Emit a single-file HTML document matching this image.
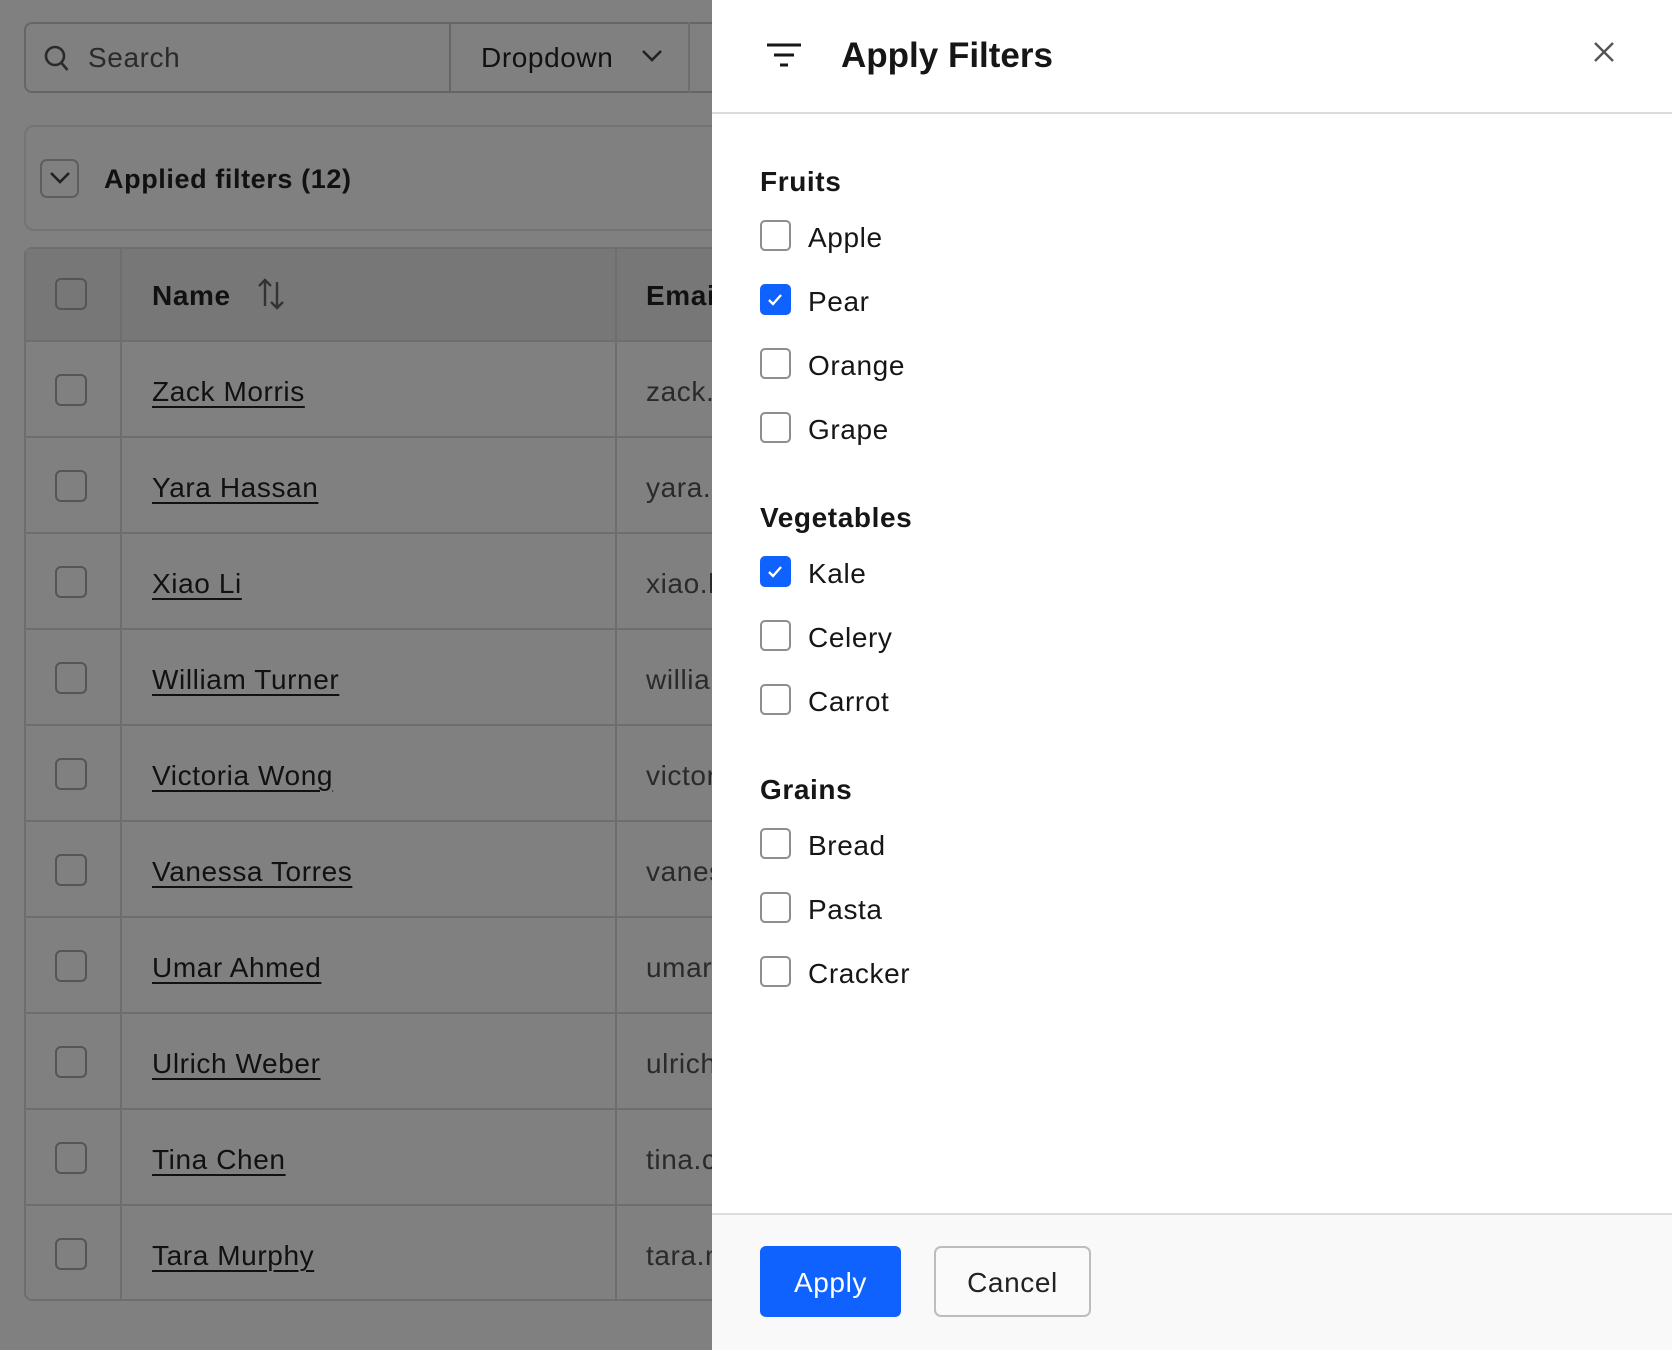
<!DOCTYPE html>
<html><head><meta charset="utf-8">
<style>
*{box-sizing:border-box;margin:0;padding:0}
body{width:1672px;height:1350px;overflow:hidden;background:#808080;font-family:"Liberation Sans",sans-serif;color:#111;position:relative;letter-spacing:0.6px}
.a{position:absolute}
.cb{position:absolute;width:32px;height:32px;border:2px solid #555;border-radius:6px}
.nm{position:absolute;left:152px;font-size:28px;text-decoration:underline;text-underline-offset:5px;text-decoration-thickness:2px;color:#111;margin-top:2px}
.em{position:absolute;left:646px;font-size:28px;color:#2a2a2a;white-space:nowrap;margin-top:2px}
.hl{position:absolute;left:24px;width:700px;height:2px;background:#6e6e6e}
.panel{position:absolute;left:712px;top:0;width:960px;height:1350px;background:#fff}
.pc{position:absolute;left:48px;width:31px;height:31px;border:2px solid #8d8d93;border-radius:5px;background:#fff}
.pc.on{background:#0f62fe;border-color:#0f62fe}
.pl{position:absolute;left:96px;font-size:28px;color:#161616;line-height:32px;margin-top:2px}
.ph{position:absolute;left:48px;font-size:28px;font-weight:bold;color:#161616;line-height:32px;margin-top:2px}
</style></head><body>
<div class="a" style="left:24px;top:22px;width:720px;height:71px;border:2px solid #666;border-radius:8px"></div>
<div class="a" style="left:449px;top:22px;width:2px;height:71px;background:#666"></div>
<div class="a" style="left:688px;top:22px;width:2px;height:71px;background:#6e6e6e"></div>
<svg class="a" style="left:43px;top:44px" width="28" height="30" viewBox="0 0 28 30"><circle cx="12" cy="12" r="9" fill="none" stroke="#2a2a2a" stroke-width="2.6"/><path d="M18.5 19l6 7" stroke="#2a2a2a" stroke-width="2.6"/></svg>
<div class="a" style="left:88px;top:42px;font-size:28px;color:#2a2a2a">Search</div>
<div class="a" style="left:481px;top:42px;font-size:28px;color:#111">Dropdown</div>
<svg class="a" style="left:640px;top:48px" width="24" height="16" viewBox="0 0 24 16"><path d="M3 3l9 9 9-9" fill="none" stroke="#222" stroke-width="2.6"/></svg>
<div class="a" style="left:24px;top:125px;width:720px;height:106px;border:2px solid #747474;border-radius:10px"></div>
<div class="a" style="left:40px;top:159px;width:39px;height:39px;border:2px solid #5e5e5e;border-radius:7px"></div>
<svg class="a" style="left:48px;top:170px" width="24" height="16" viewBox="0 0 24 16"><path d="M3 3l9 9 9-9" fill="none" stroke="#222" stroke-width="2.6"/></svg>
<div class="a" style="left:104px;top:164px;font-size:27px;font-weight:bold;color:#111">Applied filters (12)</div>
<div class="a" style="left:24px;top:247px;width:720px;height:1054px;border:2px solid #6e6e6e;border-radius:8px"></div>
<div class="a" style="left:26px;top:249px;width:700px;height:92px;background:#777"></div>
<div class="a" style="left:120px;top:247px;width:2px;height:1054px;background:#6e6e6e"></div>
<div class="a" style="left:615px;top:247px;width:2px;height:1054px;background:#6e6e6e"></div>
<div class="cb" style="left:55px;top:278px"></div>
<div class="a" style="left:152px;top:280px;font-size:28px;font-weight:bold">Name</div>
<svg class="a" style="left:256px;top:276px" width="32" height="36" viewBox="0 0 32 36"><path d="M9 30V4M3 10l6-6 6 6M21 6v26M15 26l6 6 6-6" fill="none" stroke="#333" stroke-width="2.4"/></svg>
<div class="a" style="left:646px;top:280px;font-size:28px;font-weight:bold;white-space:nowrap">Email</div>
<div class="hl" style="top:340px"></div>
<div class="hl" style="top:436px"></div><div class="hl" style="top:532px"></div><div class="hl" style="top:628px"></div><div class="hl" style="top:724px"></div><div class="hl" style="top:820px"></div><div class="hl" style="top:916px"></div><div class="hl" style="top:1012px"></div><div class="hl" style="top:1108px"></div><div class="hl" style="top:1204px"></div>
<div class="cb" style="left:55px;top:374px"></div><div class="nm" style="top:374px">Zack Morris</div><div class="em" style="top:374px">zack.morris@example.com</div>
<div class="cb" style="left:55px;top:470px"></div><div class="nm" style="top:470px">Yara Hassan</div><div class="em" style="top:470px">yara.hassan@example.com</div>
<div class="cb" style="left:55px;top:566px"></div><div class="nm" style="top:566px">Xiao Li</div><div class="em" style="top:566px">xiao.li@example.com</div>
<div class="cb" style="left:55px;top:662px"></div><div class="nm" style="top:662px">William Turner</div><div class="em" style="top:662px">william@example.com</div>
<div class="cb" style="left:55px;top:758px"></div><div class="nm" style="top:758px">Victoria Wong</div><div class="em" style="top:758px">victoria@example.com</div>
<div class="cb" style="left:55px;top:854px"></div><div class="nm" style="top:854px">Vanessa Torres</div><div class="em" style="top:854px">vanessa@example.com</div>
<div class="cb" style="left:55px;top:950px"></div><div class="nm" style="top:950px">Umar Ahmed</div><div class="em" style="top:950px">umar@example.com</div>
<div class="cb" style="left:55px;top:1046px"></div><div class="nm" style="top:1046px">Ulrich Weber</div><div class="em" style="top:1046px">ulrich@example.com</div>
<div class="cb" style="left:55px;top:1142px"></div><div class="nm" style="top:1142px">Tina Chen</div><div class="em" style="top:1142px">tina.chen@example.com</div>
<div class="cb" style="left:55px;top:1238px"></div><div class="nm" style="top:1238px">Tara Murphy</div><div class="em" style="top:1238px">tara.murphy@example.com</div>

<div class="panel">
<svg class="a" style="left:54px;top:42px" width="36" height="28" viewBox="0 0 36 28"><path d="M1 3h34M8 13h20M14 23h8" stroke="#161616" stroke-width="3"/></svg>
<div class="a" style="left:129px;top:36px;font-size:35px;font-weight:bold;color:#161616;letter-spacing:0">Apply Filters</div>
<svg class="a" style="left:881px;top:41px" width="22" height="22" viewBox="0 0 22 22"><path d="M2 2l18 18M20 2L2 20" stroke="#555" stroke-width="2.4"/></svg>
<div class="a" style="left:0;top:112px;width:960px;height:2px;background:#dcdce0"></div>

<div class="ph" style="top:164px">Fruits</div>
<div class="pc" style="top:220px"></div><div class="pl" style="top:220px">Apple</div>
<div class="pc on" style="top:284px"><svg width="27" height="27" viewBox="0 0 27 27"><path d="M7 14l4 4 8-9" fill="none" stroke="#fff" stroke-width="2.4"/></svg></div><div class="pl" style="top:284px">Pear</div>
<div class="pc" style="top:348px"></div><div class="pl" style="top:348px">Orange</div>
<div class="pc" style="top:412px"></div><div class="pl" style="top:412px">Grape</div>

<div class="ph" style="top:500px">Vegetables</div>
<div class="pc on" style="top:556px"><svg width="27" height="27" viewBox="0 0 27 27"><path d="M7 14l4 4 8-9" fill="none" stroke="#fff" stroke-width="2.4"/></svg></div><div class="pl" style="top:556px">Kale</div>
<div class="pc" style="top:620px"></div><div class="pl" style="top:620px">Celery</div>
<div class="pc" style="top:684px"></div><div class="pl" style="top:684px">Carrot</div>

<div class="ph" style="top:772px">Grains</div>
<div class="pc" style="top:828px"></div><div class="pl" style="top:828px">Bread</div>
<div class="pc" style="top:892px"></div><div class="pl" style="top:892px">Pasta</div>
<div class="pc" style="top:956px"></div><div class="pl" style="top:956px">Cracker</div>

<div class="a" style="left:0;top:1213px;width:960px;height:137px;background:#f9f9f9;border-top:2px solid #dcdce0"></div>
<div class="a" style="left:48px;top:1246px;width:141px;height:71px;background:#0f62fe;border-radius:6px;color:#fff;font-size:28px;line-height:73px;text-align:center">Apply</div>
<div class="a" style="left:222px;top:1246px;width:157px;height:71px;background:#fafafa;border:2px solid #bdbdbd;border-radius:7px;color:#222;font-size:28px;line-height:69px;text-align:center">Cancel</div>
</div>
</body></html>
